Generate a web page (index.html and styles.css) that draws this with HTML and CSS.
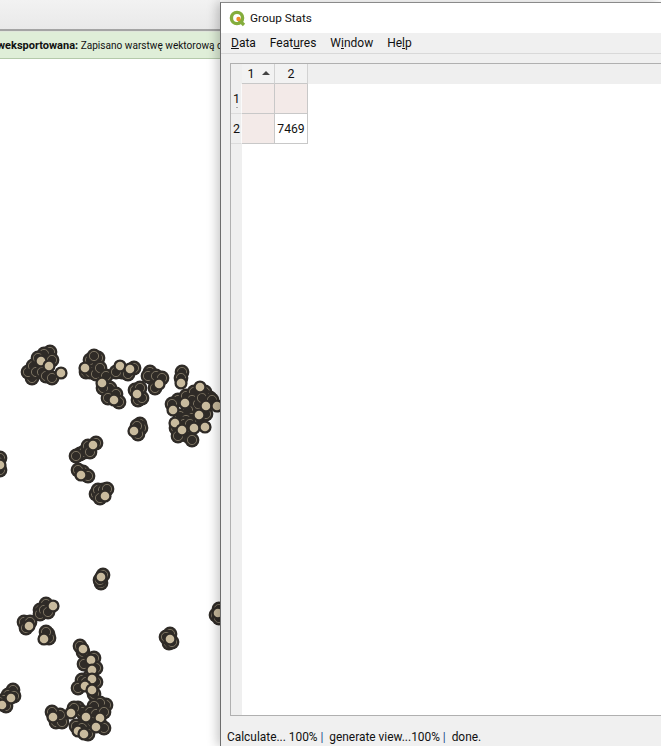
FILE: index.html
```html
<!DOCTYPE html>
<html lang="en">
<head>
    <meta charset="UTF-8" />
    <title>Group Stats</title>
    <link rel="stylesheet" href="styles.css">
</head>
<body>
    <div class="main-area">
        <div class="toolbar"></div>
        <div class="message-bar"><span class="message-text"><b>weksportowana:</b> Zapisano warstwę wektorową do pliku</span></div>
        <div class="map-canvas">
            <svg class="map-svg" width="220" height="687" viewBox="0 59 220 687" id="mapSvg"></svg>
        </div>
    </div>
    <div class="stats-window">
        <div class="title-bar">
            <svg class="app-icon" width="17" height="17" viewBox="0 0 17 17">
                <circle cx="8" cy="8" r="5.6" fill="none" stroke="#84ad3c" stroke-width="3.4"/>
                <path d="M10 10 L15 15" stroke="#84ad3c" stroke-width="3.2"/>
                <circle cx="9.5" cy="9" r="2.2" fill="#ee8a2a"/>
            </svg>
            <span>Group Stats</span>
        </div>
        <div class="menu-bar">
            <span class="menu-item"><u>D</u>ata</span>
            <span class="menu-item">Feat<u>u</u>res</span>
            <span class="menu-item">W<u>i</u>ndow</span>
            <span class="menu-item">He<u>l</u>p</span>
        </div>
        <div class="table-frame">
            <div class="table-head">
                <div class="corner"></div>
                <div class="col-head col-one">1<span class="sort-arrow"></span></div>
                <div class="col-head col-two">2</div>
            </div>
            <div class="table-body">
                <div class="row-heads">
                    <div class="row-head">1<i class="tick"></i></div>
                    <div class="row-head">2</div>
                </div>
                <div class="cells">
                    <div class="cell filled"></div>
                    <div class="cell filled"></div>
                    <div class="cell filled"></div>
                    <div class="cell">7469</div>
                </div>
            </div>
        </div>
        <div class="status-bar">Calculate... 100% <span class="sep">|</span>&nbsp; generate view...100% <span class="sep">|</span>&nbsp; done.</div>
    </div>
    <script src="map.js"></script>
</body>
</html>
```

FILE: styles.css
```css
/* Page */
html, body {
    margin: 0;
    padding: 0;
    height: 100%;
    overflow: hidden;
}
body {
    display: flex;
    width: 661px;
    height: 746px;
    background: #fff;
    font-family: Roboto, "Liberation Sans", sans-serif;
    color: #111;
}

/* Left side: QGIS main window behind the dialog */
.main-area {
    width: 220px;
    flex: none;
    display: flex;
    flex-direction: column;
    overflow: hidden;
}
.toolbar {
    height: 29px;
    flex: none;
    background: linear-gradient(#f2f2f2, #e9e9e9);
    border-bottom: 2px solid #a4a4a4;
}
.message-bar {
    height: 26px;
    flex: none;
    display: flex;
    align-items: center;
    background: #dfeed8;
    border-top: 1px solid #dfe6da;
    border-bottom: 1px solid #b4c9aa;
    font-size: 10.1px;
    overflow: hidden;
    white-space: nowrap;
}
.message-text {
    margin-left: -3px;
}
.message-text b {
    font-size: 11px;
}
.map-canvas {
    flex: 1;
    background: #fff;
}
.map-svg {
    display: block;
    filter: blur(0.35px);
}

/* Group Stats dialog */
.stats-window {
    flex: 1;
    margin-top: 2px;
    display: flex;
    flex-direction: column;
    border-left: 1px solid #6e6e6e;
    border-top: 1px solid #8a8a8a;
    box-shadow: -3px 0 10px rgba(0, 0, 0, 0.22);
    background: #f0f0f0;
    z-index: 1;
}
.title-bar {
    height: 30px;
    flex: none;
    display: flex;
    align-items: center;
    gap: 4px;
    padding-left: 8px;
    background: #fff;
    font-size: 11.8px;
}
.menu-bar {
    height: 20px;
    flex: none;
    display: flex;
    align-items: center;
    gap: 14px;
    padding-left: 10px;
    background: #f0f0f0;
    border-bottom: 1px solid #d9d9d9;
    font-size: 12px;
}
.table-frame {
    flex: 1;
    margin: 9px 0 0 9px;
    display: flex;
    flex-direction: column;
    background: #fff;
    border: 1px solid #b0b0b0;
    border-right: none;
}
.table-head {
    display: flex;
    height: 20px;
    flex: none;
    background: #efefef;
    font-size: 12.5px;
}
.corner {
    width: 11px;
}
.col-head {
    display: flex;
    align-items: center;
    justify-content: center;
    box-sizing: border-box;
    width: 33px;
    background: #f2f2f2;
    border-right: 1px solid #d2d2d2;
    border-bottom: 1px solid #c8c8c8;
}
.col-one {
    gap: 7px;
    padding-left: 1px;
}
.sort-arrow {
    width: 0;
    height: 0;
    margin-bottom: 2px;
    border-left: 4px solid transparent;
    border-right: 4px solid transparent;
    border-bottom: 4px solid #444;
}
.table-body {
    flex: 1;
    display: flex;
}
.row-heads {
    width: 11px;
    flex: none;
    background: #efefef;
    font-size: 12.5px;
}
.row-head {
    position: relative;
    height: 30px;
    line-height: 29px;
    box-sizing: border-box;
    padding-left: 2px;
    border-bottom: 1px solid #dcdcdc;
    border-right: 1px solid #fafafa;
    overflow: hidden;
}
.tick {
    position: absolute;
    left: 5px;
    top: 23px;
    width: 2px;
    height: 1px;
    background: #aaa;
}
.cells {
    display: grid;
    grid-template-columns: 33px 33px;
    grid-auto-rows: 30px;
    align-content: start;
}
.cell {
    box-sizing: border-box;
    border-right: 1px solid #c8c8c8;
    border-bottom: 1px solid #c8c8c8;
    font-size: 12.2px;
    line-height: 31px;
    text-align: center;
}
.filled {
    background: #f3eae8;
}
.status-bar {
    height: 30px;
    box-sizing: border-box;
    flex: none;
    padding: 12px 0 0 6px;
    line-height: 18px;
    background: #f0f0f0;
    font-size: 11.9px;
    white-space: nowrap;
}
.sep {
    color: #1a4f8a;
}
```

FILE: map.js
```js
// stacked markers first (dark, thin arc of the fill left showing), then the ones whose full centre shows
const under = [
    [32,378],[28,372],[33,366],[36,372],[42,372],[46,376],[52,378],[50,352],[44,354],[52,360],[38,358],
    [86,372],[90,372],[96,374],[90,360],[98,358],[94,356],[100,368],
    [106,376],[110,388],[103,388],[116,394],[119,402],[108,398],
    [122,372],[128,374],[116,372],[134,368],
    [150,372],[152,378],[148,376],[156,376],[162,378],[155,388],
    [182,372],[181,378],[138,400],[142,398],[135,390],[140,388],
    [140,424],[141,428],[138,434],[137,426],
    [178,400],[186,396],[194,392],[205,392],[210,398],[192,400],[198,404],[202,398],[188,410],[192,418],[180,416],[186,420],[172,404],[176,428],[184,424],[190,424],[188,436],[192,440],[200,420],[206,414],[212,400],[178,436],
    [80,454],[84,452],[88,446],[90,452],[96,443],[76,456],
    [83,472],[88,476],[78,470],
    [96,494],[98,490],[103,490],[107,489],[100,498],
    [0,458],[-2,462],[0,470],
    [101,583],[100,580],[103,575],
    [40,610],[40,614],[46,604],[44,610],[48,612],
    [24,622],[26,628],[30,622],
    [48,634],[49,638],[46,632],
    [170,634],[169,643],[166,637],[172,642],
    [219,609],[216,615],[219,618],
    [83,652],[80,646],[88,662],[94,658],[84,664],[96,668],[90,676],[96,682],[82,680],[78,688],[86,682],[94,694],
    [13,690],[8,695],[14,696],[4,700],[-1,702],[6,706],
    [56,722],[62,722],[60,715],[52,712],
    [78,708],[82,712],[74,708],
    [106,705],[100,703],[94,706],[90,712],[96,714],[104,712],[84,722],[92,722],[100,724],[104,728],[76,726],[82,728],[88,734]
];
const tops = [
    [41,361],[49,366],[61,373],[85,368],
    [120,366],[130,369],[102,383],[114,400],
    [137,394],[134,431],[159,384],[181,383],
    [173,410],[185,403],[200,387],[206,406],[217,406],[199,415],[175,423],[182,430],[194,428],[205,427],
    [93,445],[81,475],[105,496],
    [0,465],
    [101,577],[53,606],[29,626],[44,639],[170,639],[218,613],
    [83,649],[91,660],[92,670],[92,679],[85,686],[92,690],
    [11,698],[2,705],
    [53,717],[71,713],[86,717],[100,718],[96,727],[78,731],[84,734]
];

const svg = document.getElementById("mapSvg");
let markup = "";
for (const [x, y] of under) {
    markup += `<circle cx="${x}" cy="${y}" r="7.4" fill="#2f2b27"/>`;
    markup += `<circle cx="${x}" cy="${y}" r="4.6" fill="none" stroke="#8f8570" stroke-width="0.8"/>`;
}
for (const [x, y] of tops) {
    markup += `<circle cx="${x}" cy="${y}" r="6.6" fill="#2f2b27"/>`;
    markup += `<circle cx="${x}" cy="${y}" r="4.3" fill="#c9bb9e"/>`;
}
svg.innerHTML = markup;
```
